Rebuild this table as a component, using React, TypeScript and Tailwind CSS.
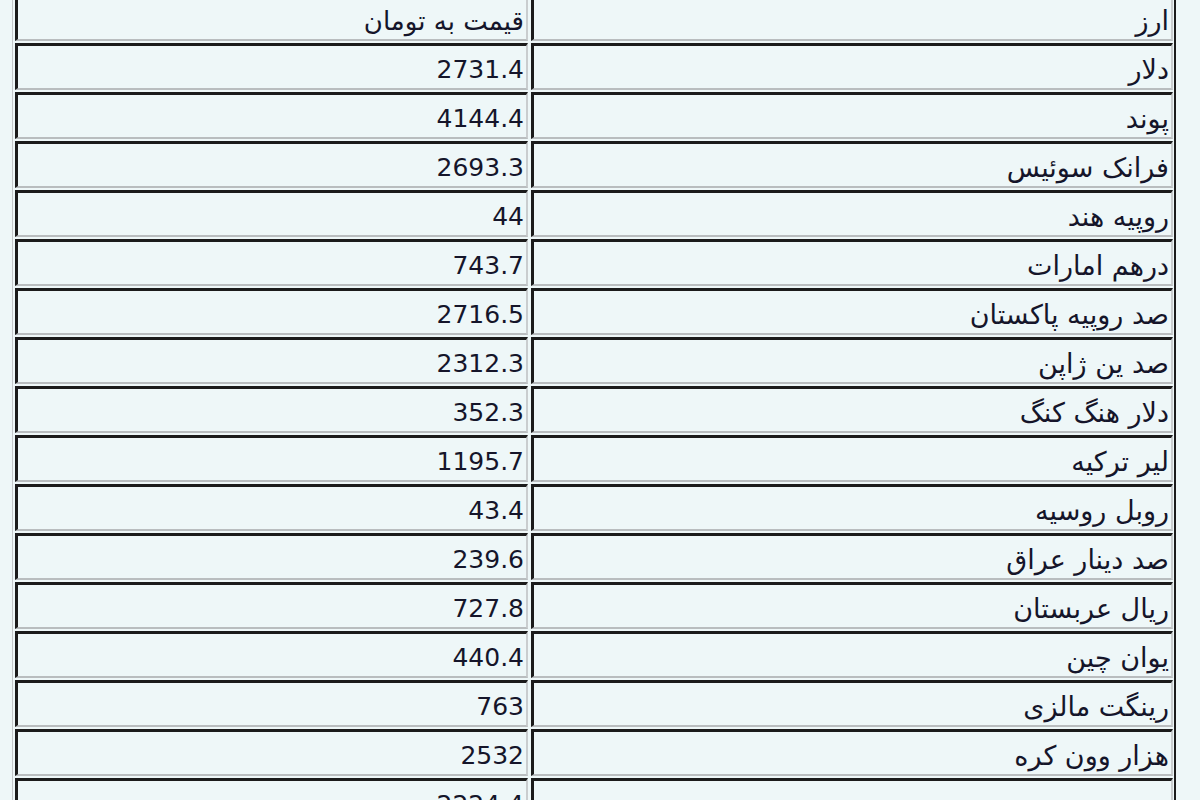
const rows: [string, string][] = [
  ['دلار', '2731.4'],
  ['پوند', '4144.4'],
  ['فرانک سوئیس', '2693.3'],
  ['روپیه هند', '44'],
  ['درهم امارات', '743.7'],
  ['صد روپیه پاکستان', '2716.5'],
  ['صد ین ژاپن', '2312.3'],
  ['دلار هنگ کنگ', '352.3'],
  ['لیر ترکیه', '1195.7'],
  ['روبل روسیه', '43.4'],
  ['صد دینار عراق', '239.6'],
  ['ریال عربستان', '727.8'],
  ['یوان چین', '440.4'],
  ['رینگت مالزی', '763'],
  ['هزار وون کره', '2532'],
  ['', '2224.4'],
];

function Cell({ children, wide }: { children: React.ReactNode; wide?: boolean }) {
  return (
    <div
      className={`${wide ? 'w-[642px] text-[27px]' : 'w-[513px] text-[25px]'} h-[47px] shrink-0 flex items-center justify-start pt-[5px] pr-[2px] border-t-[3px] border-l-[3px] border-b-2 border-r-2 border-t-[#1b1b1b] border-l-[#1b1b1b] border-b-[#b9bdbf] border-r-[#c9cdcf] bg-[#eef7f8] leading-none text-[#15152a] whitespace-nowrap`}
    >
      {children}
    </div>
  );
}

export default function App() {
  return (
    <div className="w-[1200px] h-[800px] overflow-hidden bg-[#eef7f8] pl-[12px]" style={{ fontFamily: '"DejaVu Sans", Verdana, sans-serif' }}>
      <div
        dir="rtl"
        className="w-[1164px] -mt-[8px] p-[1px] border-l border-t border-r-2 border-b-2 border-l-[#c3c7c9] border-t-[#c3c7c9] border-r-[#1b1b1b] border-b-[#1b1b1b] flex flex-col gap-[2px]"
      >
        <div className="flex gap-[3px]">
          <Cell wide>ارز</Cell>
          <Cell>
            <span className="text-[26px]">قیمت به تومان</span>
          </Cell>
        </div>
        {rows.map(([name, price], i) => (
          <div key={i} className="flex gap-[3px]">
            <Cell wide>{name}</Cell>
            <Cell>{price}</Cell>
          </div>
        ))}
      </div>
    </div>
  );
}
